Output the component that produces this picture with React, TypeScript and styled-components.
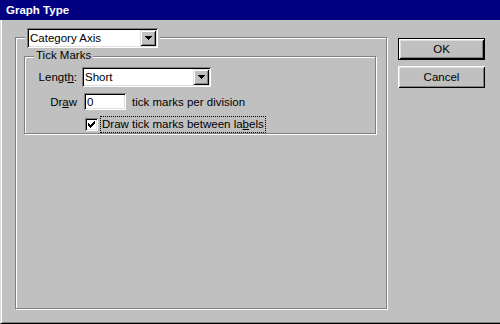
import React from 'react';
import styled, { createGlobalStyle } from 'styled-components';

const colors = {
  face: '#c0c0c0',
  light: '#dfdfdf',
  hilite: '#ffffff',
  shadow: '#808080',
  dark: '#000000',
  title: '#000080',
};

const sunken = `
  box-shadow: inset 1px 1px ${colors.shadow}, inset -1px -1px ${colors.hilite},
    inset 2px 2px ${colors.dark}, inset -2px -2px ${colors.light};
`;

const raised = `
  box-shadow: inset 1px 1px ${colors.light}, inset -1px -1px ${colors.dark},
    inset 2px 2px ${colors.hilite}, inset -2px -2px ${colors.shadow};
`;

const GlobalStyle = createGlobalStyle`
  html, body {
    margin: 0;
    padding: 0;
    background: ${colors.face};
  }
  body {
    font-family: "Liberation Sans", Arial, sans-serif;
    font-size: 11.5px;
    color: #000;
  }
`;

const Window = styled.div`
  width: 500px;
  height: 324px;
  display: flex;
  flex-direction: column;
  background: ${colors.face};
`;

const TitleBar = styled.div`
  height: 20px;
  flex: none;
  display: flex;
  align-items: center;
  padding-left: 6px;
  background: ${colors.title};
  color: #fff;
  font-weight: bold;
`;

const Body = styled.div`
  flex: 1;
  display: flex;
  align-items: flex-start;
  box-sizing: border-box;
  padding: 17px 0 0 14px;
  border-left: 1px solid ${colors.light};
  border-bottom: 1px solid ${colors.dark};
  box-shadow: inset 1px 0 ${colors.hilite}, inset 0 -1px ${colors.shadow};
`;

const Group = styled.div<{ $w: number; $h: number }>`
  position: relative;
  box-sizing: border-box;
  width: ${(p) => p.$w}px;
  height: ${(p) => p.$h}px;
  border: 1px solid ${colors.shadow};
  box-shadow: inset 1px 1px ${colors.hilite}, 1px 1px ${colors.hilite};
`;

const OuterGroup = styled(Group)`
  padding: 18px 0 0 8px;
`;

const InnerGroup = styled(Group)`
  padding: 10px 0 0 7px;
`;

const Legend = styled.div<{ $left: number; $top: number }>`
  position: absolute;
  left: ${(p) => p.$left}px;
  top: ${(p) => p.$top}px;
  padding: 0 2px;
  background: ${colors.face};
  line-height: 13px;
`;

const Combo = styled.div<{ $w: number }>`
  box-sizing: border-box;
  width: ${(p) => p.$w}px;
  height: 20px;
  padding: 2px;
  display: flex;
  align-items: center;
  background: #fff;
  ${sunken}
`;

const ComboText = styled.span`
  flex: 1;
  padding-left: 1px;
`;

const DropButton = styled.div`
  width: 16px;
  height: 16px;
  display: flex;
  align-items: center;
  justify-content: center;
  background: ${colors.face};
  ${raised}
`;

const Row = styled.div<{ $gap?: number; $h: number }>`
  display: flex;
  align-items: center;
  height: ${(p) => p.$h}px;
  margin-top: ${(p) => p.$gap ?? 0}px;
`;

const Label = styled.span`
  width: 45px;
  margin-right: 5px;
  text-align: right;
`;

const TextField = styled.div`
  box-sizing: border-box;
  width: 42px;
  height: 17px;
  margin-left: 2px;
  padding: 0 3px;
  display: flex;
  align-items: center;
  background: #fff;
  ${sunken}
`;

const Caption = styled.span`
  margin-left: 6px;
`;

const CheckBox = styled.div`
  box-sizing: border-box;
  width: 13px;
  height: 13px;
  margin-left: 3px;
  display: flex;
  align-items: center;
  justify-content: center;
  background: #fff;
  ${sunken}
`;

const FocusLabel = styled.span`
  margin-left: 2px;
  padding: 1px 1px 1px 1px;
  line-height: 13px;
  border: 1px dotted #000;
`;

const Buttons = styled.div`
  display: flex;
  flex-direction: column;
  gap: 6px;
  margin: 1px 0 0 11px;
`;

const Button = styled.div<{ $default?: boolean }>`
  box-sizing: border-box;
  width: 87px;
  height: 22px;
  display: flex;
  align-items: center;
  justify-content: center;
  background: ${colors.face};
  border: ${(p) => (p.$default ? `1px solid ${colors.dark}` : 'none')};
  box-shadow: inset 1px 1px ${colors.hilite}, inset -1px -1px ${colors.dark},
    inset 2px 2px ${colors.light}, inset -2px -2px ${colors.shadow};
`;

function Arrow() {
  return (
    <svg width="7" height="4" viewBox="0 0 7 4" shapeRendering="crispEdges">
      <path d="M0 0h7v1H0z M1 1h5v1H1z M2 2h3v1H2z M3 3h1v1H3z" fill="#000" />
    </svg>
  );
}

function Check() {
  return (
    <svg width="7" height="7" viewBox="0 0 7 7" shapeRendering="crispEdges">
      <path
        d="M6 0h1v3H6z M5 1h1v3H5z M4 2h1v3H4z M3 3h1v3H3z M2 4h1v3H2z M1 3h1v3H1z M0 2h1v3H0z"
        fill="#000"
      />
    </svg>
  );
}

function Select({ value, width }: { value: string; width: number }) {
  return (
    <Combo $w={width}>
      <ComboText>{value}</ComboText>
      <DropButton>
        <Arrow />
      </DropButton>
    </Combo>
  );
}

export default function App() {
  return (
    <>
      <GlobalStyle />
      <Window>
        <TitleBar>Graph Type</TitleBar>
        <Body>
          <OuterGroup $w={372} $h={272}>
            <Legend $left={9} $top={-10}>
              <Select value="Category Axis" width={131} />
            </Legend>
            <InnerGroup $w={352} $h={78}>
              <Legend $left={9} $top={-8}>Tick Marks</Legend>
              <Row $h={20}>
                <Label>
                  Lengt<u>h</u>:
                </Label>
                <Select value="Short" width={129} />
              </Row>
              <Row $h={17} $gap={6}>
                <Label>
                  Dr<u>a</u>w
                </Label>
                <TextField>0</TextField>
                <Caption>tick marks per division</Caption>
              </Row>
              <Row $h={17} $gap={6}>
                <Label />
                <CheckBox>
                  <Check />
                </CheckBox>
                <FocusLabel>
                  Draw tick marks between la<u>b</u>els
                </FocusLabel>
              </Row>
            </InnerGroup>
          </OuterGroup>
          <Buttons>
            <Button $default>OK</Button>
            <Button>Cancel</Button>
          </Buttons>
        </Body>
      </Window>
    </>
  );
}
